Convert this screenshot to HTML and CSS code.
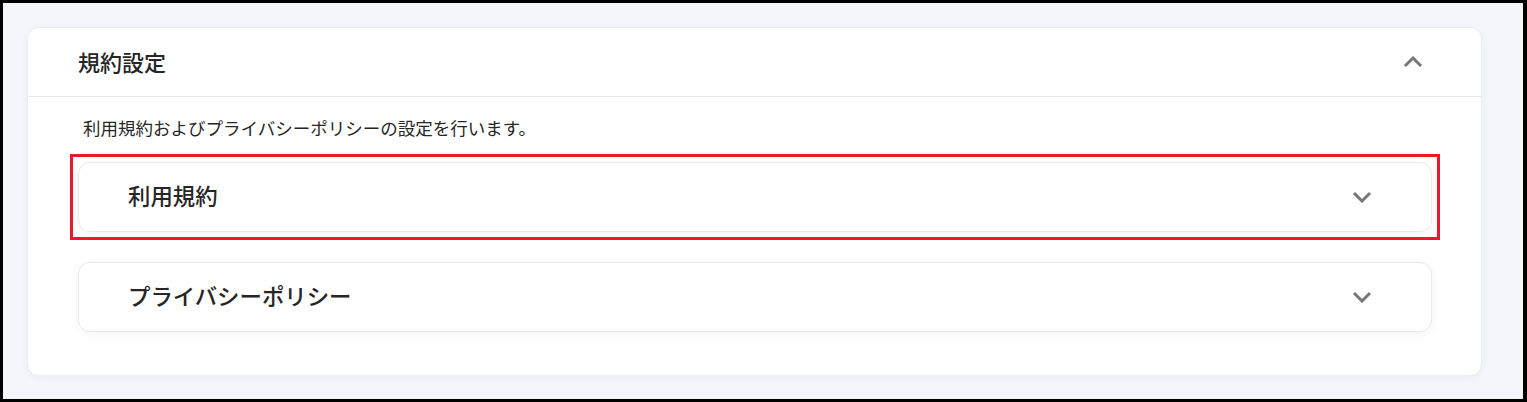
FILE: index.html
```html
<!DOCTYPE html>
<html lang="ja">
<head>
  <meta charset="UTF-8" />
  <meta name="viewport" content="width=device-width, initial-scale=1" />
  <title>規約設定</title>
  <link rel="stylesheet" href="styles.css">
</head>
<body>

<div class="frame">
  <section class="card">
    <div class="card-header">
      <h2>規約設定</h2>
      <svg class="chevron" width="20" height="12" viewBox="0 0 20 12"><path d="M2 10 L10 2 L18 10" /></svg>
    </div>
    <div class="card-body">
      <p class="desc">利用規約およびプライバシーポリシーの設定を行います。</p>
      <div class="item highlight">
        <span class="item-title">利用規約</span>
        <svg class="chevron" width="20" height="12" viewBox="0 0 20 12"><path d="M2 2 L10 10 L18 2" /></svg>
      </div>
      <div class="item">
        <span class="item-title">プライバシーポリシー</span>
        <svg class="chevron" width="20" height="12" viewBox="0 0 20 12"><path d="M2 2 L10 10 L18 2" /></svg>
      </div>
    </div>
  </section>
</div>

</body>
</html>
```

FILE: styles.css
```css
* {
  box-sizing: border-box;
}
body {
  margin: 0;
  font-family: "Noto Sans CJK JP", "Noto Sans", sans-serif;
  color: #262626;
}
.frame {
  height: 402px;
  border-style: solid;
  border-color: #000;
  border-width: 3px 4px 3px 3px;
  background: #f3f6fb;
  padding: 24px 0 0 24px;
}
.card {
  width: 1455px;
  height: 349px;
  background: #fff;
  border: 1px solid #eceef2;
  border-radius: 12px;
  box-shadow: 0 2px 8px rgba(20, 30, 60, 0.04);
}
.card-header {
  height: 69px;
  display: flex;
  align-items: center;
  justify-content: space-between;
  padding: 0 58px 0 50px;
  border-bottom: 1px solid #e8e9ec;
}
.card-header h2 {
  margin: 0;
  font-size: 22px;
  font-weight: 500;
  line-height: 1;
  padding-bottom: 3px;
}
.chevron path {
  fill: none;
  stroke: #777;
  stroke-width: 3;
}
.card-body {
  padding: 0 49px 0 50px;
}
.desc {
  margin: 0;
  height: 65px;
  padding: 22px 0 0 5px;
  font-size: 17.5px;
  line-height: 1;
}
.item {
  height: 70px;
  display: flex;
  align-items: center;
  justify-content: space-between;
  padding: 0 59px 0 49px;
  border: 1px solid #e8e9ec;
  border-radius: 12px;
  box-shadow: 0 2px 10px rgba(20, 30, 60, 0.05);
  margin-bottom: 30px;
}
.item-title {
  font-size: 22.4px;
  font-weight: 500;
  line-height: 1;
  padding-bottom: 3px;
}
.highlight {
  position: relative;
}
.highlight::after {
  content: "";
  position: absolute;
  inset: -9px;
  border: 3px solid #e8192c;
}
```
